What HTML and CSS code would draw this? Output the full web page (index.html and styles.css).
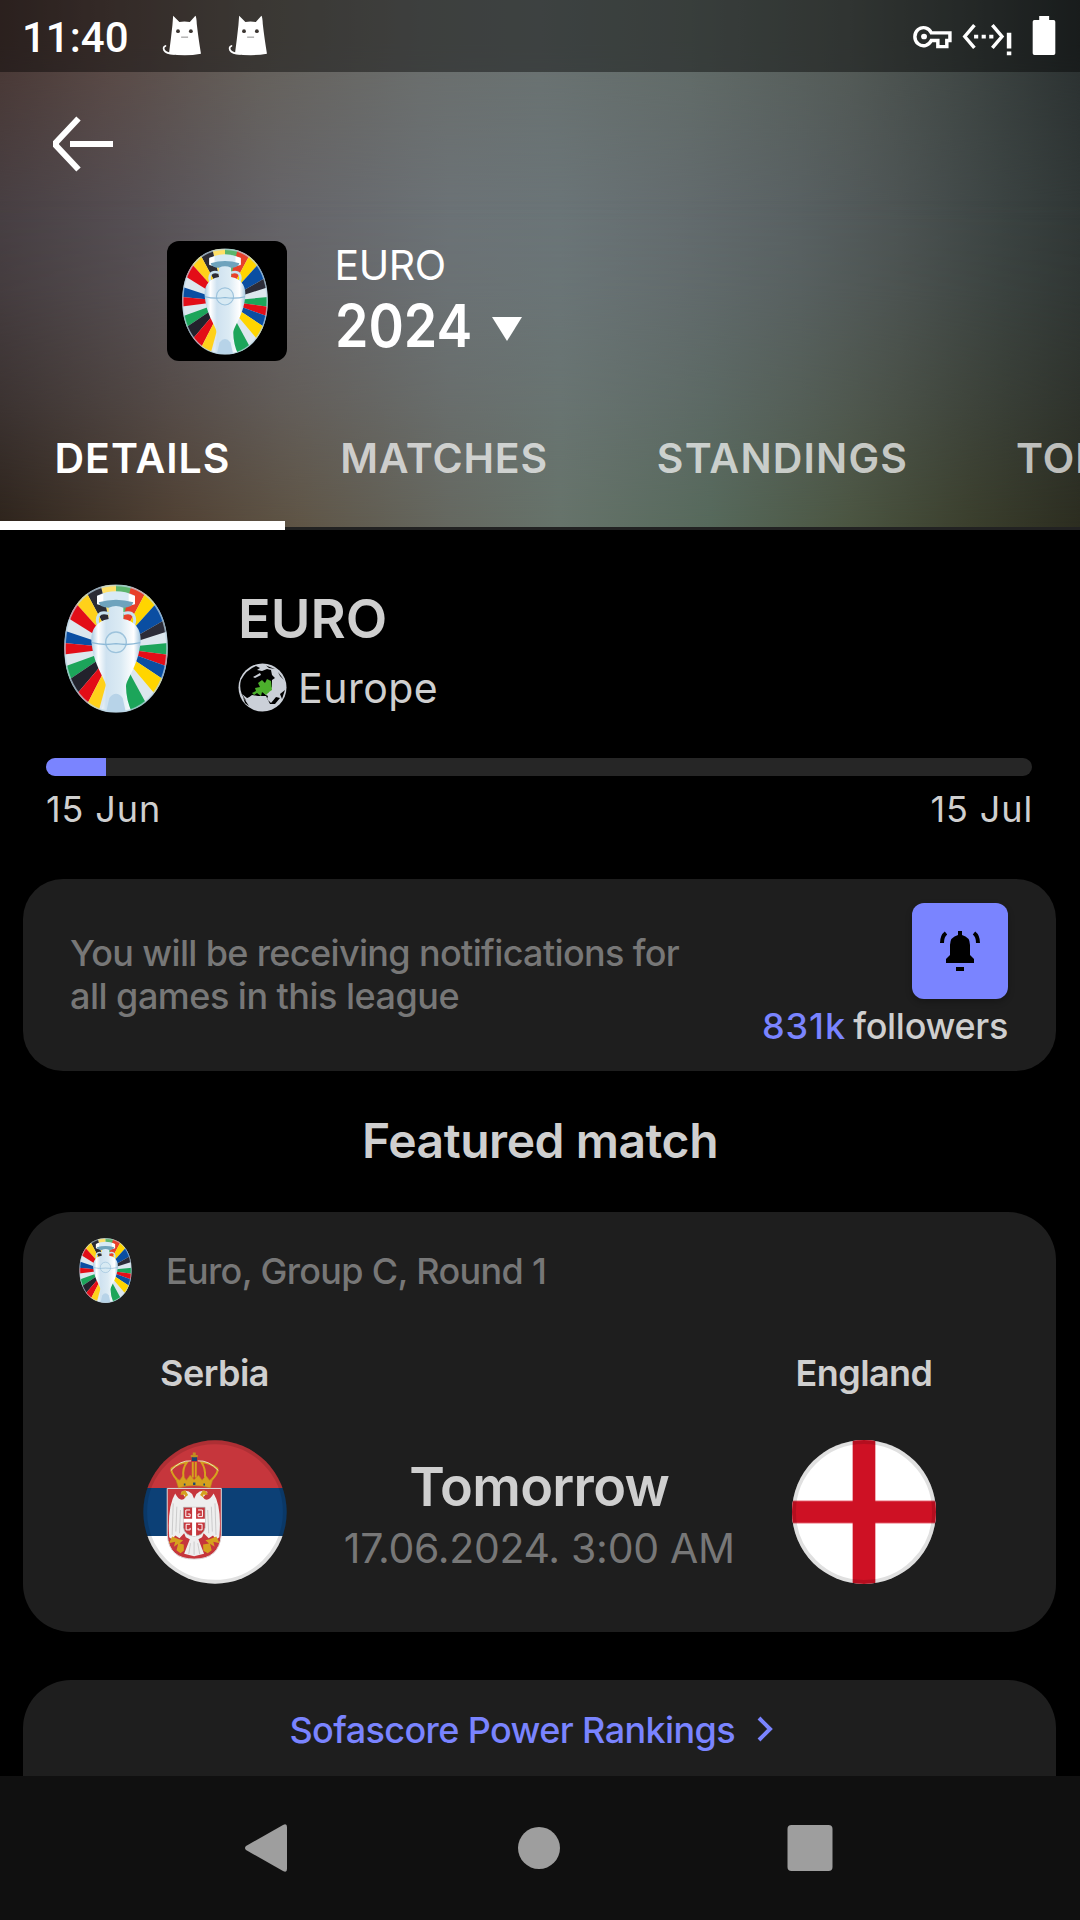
FILE: index.html
```html
<!DOCTYPE html>
<html lang="en">
<head>
<meta charset="utf-8">
<title>EURO 2024</title>
<link rel="stylesheet" href="styles.css">
</head>
<body>
<svg class="defs" width="0" height="0" aria-hidden="true">
  <defs>
    <clipPath id="oval"><path d="M260 45C350 45 415 115 415 235C415 350 350 428 260 428C170 428 105 350 105 235C105 115 170 45 260 45Z"/></clipPath>
    <linearGradient id="silver" x1="0" x2="1" y1="0" y2="0"><stop offset="0" stop-color="#a9cbe2"/><stop offset=".14" stop-color="#fff"/><stop offset=".3" stop-color="#cfe2f0"/><stop offset=".6" stop-color="#dcebf4"/><stop offset=".86" stop-color="#fff"/><stop offset="1" stop-color="#a3c6df"/></linearGradient>
    <symbol id="trophy" viewBox="104 43 312 387">
      <g clip-path="url(#oval)">
        <path fill="#dce7ee" d="M100 40h320v400H100z"/>
        <path fill="#ffe066" d="M260 235L210 30H260z"/>
        <path fill="#5bb56c" d="M260 235V30H315z"/>
        <path fill="#e8402a" d="M260 235L310 30L358 52z"/>
        <path fill="#ffd500" d="M260 235L358 52L398 82z"/>
        <path fill="#0a4ea2" d="M260 235L398 82L425 140z"/>
        <path fill="#2c2c38" d="M260 235L425 140L430 180z"/>
        <path fill="#1ca55a" d="M260 235L430 219V257z"/>
        <path fill="#e30d17" d="M260 235L430 257V296z"/>
        <path fill="#0a4ea2" d="M260 235L430 296L420 341z"/>
        <path fill="#ffd500" d="M260 235L420 341L385 383z"/>
        <path fill="#1ca55a" d="M260 235L358 415L300 440z"/>
        <path fill="#2c2c34" d="M260 235L166 58L206 38L210 30z"/>
        <path fill="#ffd11a" d="M260 235L166 58L128 88z"/>
        <path fill="#e30d17" d="M260 235L128 88L98 134z"/>
        <path fill="#0a4ea2" d="M260 235L90 178V219z"/>
        <path fill="#e30d17" d="M260 235L90 219V256z"/>
        <path fill="#1ca55a" d="M260 235L90 296L110 336z"/>
        <path fill="#22222c" d="M260 235L110 336L138 378z"/>
        <path fill="#e30d17" d="M260 235L138 378L168 414z"/>
        <path fill="#ffd11a" d="M260 235L168 414L206 432z"/>
        <path fill="none" stroke="#c8e2ef" stroke-width="9" d="M238 132C205 122 200 146 207 166M282 132C315 122 320 146 313 166"/>
        <path fill="url(#silver)" d="M238 108h44v40C325 155 338 190 333 222C326 290 292 325 290 350Q290 390 308 430H212Q230 390 230 350C228 325 194 290 187 222C182 190 195 155 238 148z"/>
        <path fill="#d8eaf5" d="M203 78Q260 52 317 78V104Q260 124 203 104z"/>
        <path fill="#fff" d="M203 80L222 72V108L203 102zM298 72L317 80V102L298 108z"/>
        <path fill="#6fa3bd" d="M208 98Q260 82 312 98Q308 114 282 114Q260 104 238 114Q212 114 208 98z"/>
        <path fill="#b7d3e8" d="M240 385Q260 360 280 385L290 430H230z"/>
        <circle cx="260" cy="218" r="31" fill="#d8eaf3" stroke="#9dc3dc" stroke-width="4"/>
        <path fill="none" stroke="#8db9d7" stroke-width="4" d="M187 219Q222 228 260 222Q298 228 333 219"/>
      </g>
      <path fill="none" stroke="#b8d3e2" stroke-opacity=".7" stroke-width="5" d="M260 47C349 47 413 117 413 235C413 349 349 427 260 427C171 427 107 349 107 235C107 117 171 47 260 47Z"/>
    </symbol>
    <symbol id="cat" viewBox="470 45 115 122" preserveAspectRatio="none">
      <path fill="#fff" d="M502 47L520 66Q534 62 550 66L566 47Q569 49 570 72Q574 110 582 160Q535 169 490 160Q496 115 500 75z"/>
      <path fill="none" stroke="#fff" stroke-width="5" stroke-linecap="round" d="M480 137Q472 140 476 150Q482 160 505 161"/>
      <circle cx="516" cy="93" r="5.500" fill="#3b3531"/><circle cx="553" cy="93" r="5.500" fill="#3b3531"/>
      <path stroke="#aaa" stroke-width="4" d="M525 111h20"/>
    </symbol>
  </defs>
</svg>

<div class="screen">
  <header class="header">
    <div class="status">
      <span class="clock">11:40</span>
      <svg class="cat"><use href="#cat"/></svg>
      <svg class="cat"><use href="#cat"/></svg>
      <div class="status-icons">
        <svg width="39" height="42" viewBox="1085 45 113 125" preserveAspectRatio="none"><path fill="none" stroke="#fff" stroke-width="10" d="M1138 98A25 27 0 1 0 1138 121H1157V139H1183V121H1192V98z"/><circle cx="1117" cy="109" r="8.500" fill="#fff"/></svg>
        <svg class="net" width="50" height="42" viewBox="1228 45 145 125" preserveAspectRatio="none"><path fill="none" stroke="#fff" stroke-width="10" d="M1264 75L1236 109L1264 143M1316 75L1344 109L1316 143"/><path fill="#fff" d="M1263 104h12v11h-12zM1285 104h12v11h-12zM1307 104h12v11h-12zM1358 98h13v47h-13zM1358 154h13v11h-13z"/></svg>
        <svg width="24" height="42" viewBox="1430 45 70 125" preserveAspectRatio="none"><path fill="#fff" d="M1451 48h29v12h13q5 0 5 5v94q0 5-5 5h-56q-5 0-5-5v-94q0-5 5-5h14z"/></svg>
      </div>
    </div>
    <div class="toolbar">
      <svg width="62" height="56" viewBox="0 0 62 56"><path fill="none" stroke="#fff" stroke-width="6" d="M26.500 2.500L4 26.500V29.500L26.500 53.500M18 28H61"/></svg>
    </div>
    <div class="season">
      <div class="logo-box"><svg width="86" height="107"><use href="#trophy"/></svg></div>
      <div class="season-text">
        <div class="season-name">EURO</div>
        <div class="season-year"><span class="year">2024</span><svg width="30" height="24" viewBox="0 0 30 24"><path fill="#fff" d="M0 0H30L15 24z"/></svg></div>
      </div>
    </div>
    <nav class="tabs">
      <div class="tab tab-details active">DETAILS</div>
      <div class="tab tab-matches">MATCHES</div>
      <div class="tab tab-standings">STANDINGS</div>
      <div class="tab tab-top">TOP PLAYERS</div>
    </nav>
  </header>

  <main class="content">
    <section class="league">
      <svg class="league-logo" width="104" height="129"><use href="#trophy"/></svg>
      <div class="league-text">
        <div class="league-name">EURO</div>
        <div class="region">
          <svg width="49" height="49" viewBox="0 0 49 49"><circle cx="24.500" cy="24.500" r="24" fill="#cbd0d8"/><path fill="#000" d="M3 17Q8 7 18 3L22 5L19 7L24 8L29 6L33 7L34 12L37 15L34 17V24L32 26L30 30H26L28 32L30 33L29 36L33 40L38 34L42 35L37 41L32 41L28 33L20 33L14 32L10 35L8 38Q0 28 3 17z"/><path fill="#cbd0d8" d="M15 14L22 10L23 12L17 15zM4 31L9 35L17 33L26 34L30 42L24 48L12 44z"/><path fill="#000" d="M28 2.500L37 6L31 5zM40 9L46 17L42 13zM42 31L47 27L44 36zM5 34L11 43L7 40z"/><path fill="#4caf2c" d="M14 30L18 28L17 25L22 24L20 20L24 17L27 20L29 16L33 18L34 27L31 29L28 32L24 29L23 33L19 30L16 32z"/></svg>
          <span>Europe</span>
        </div>
      </div>
    </section>

    <section class="season-progress">
      <div class="track"><div class="fill" style="width:6.1%"></div></div>
      <div class="dates"><span>15 Jun</span><span class="end">15 Jul</span></div>
    </section>

    <section class="card notify">
      <p class="notify-text">You will be receiving notifications for<br><span class="second-line">all games in this league</span></p>
      <div class="follow">
        <div class="bell"><svg width="42" height="42" viewBox="0 0 42 42"><path d="M19 1h4v4q8 2 8 10v10l4 4v4H7v-4l4-4V15q0-8 8-10zM17 37h8v4h-8z"/><path fill="none" stroke="#000" stroke-width="4" d="M7 3Q3 6 3 13M35 3Q39 6 39 13"/></svg></div>
        <div class="followers"><b>831k</b> followers</div>
      </div>
    </section>

    <h2 class="section-title">Featured match</h2>

    <section class="card match">
      <div class="match-head"><svg width="53" height="65"><use href="#trophy"/></svg><span>Euro, Group C, Round 1</span></div>
      <div class="match-body">
        <div class="team">
          <span class="team-name">Serbia</span>
          <svg width="144" height="144" viewBox="67 60 434 432">
            <defs><clipPath id="disc"><circle cx="284" cy="276" r="216"/></clipPath></defs>
            <g clip-path="url(#disc)">
              <path fill="#c6363c" d="M60 50h450v154H60z"/><path fill="#0c4076" d="M60 204h450v144H60z"/><path fill="#fff" d="M60 348h450v150H60z"/>
              <path fill="#c6363c" stroke="#ddd" stroke-width="3" d="M140 205H303V345Q297 418 221 418Q145 418 140 345z"/>
              <path fill="#eee" d="M182 216Q199 205 215 222L221 236L228 222Q244 205 262 216L248 232Q262 250 280 220Q305 260 297 352L287 359L278 347L265 355L250 340L245 352L234 358L251 402L221 409L191 402L208 358L196 352L191 340L177 355L164 347L155 359L146 352Q140 260 164 220Q180 250 195 232z"/>
              <path fill="none" stroke="#b9b9b9" stroke-width="2" d="M158 250L155 345M169 260L166 335M180 270L177 340M284 250L287 345M273 260L276 335M262 270L265 340M210 370L205 403M221 365V405M232 370L238 403"/>
              <path fill="#c6363c" stroke="#aaa" stroke-width="2" d="M189 262H254V323Q250 347 221 349Q193 347 189 323z"/>
              <path fill="#fff" d="M215 262h12v34h27v12h-27v41h-12v-41h-26v-12h26z"/>
              <path fill="none" stroke="#fff" stroke-width="3" d="M209 270h-13v20h13v-8h-7M233 270h13v20h-13v-8h7M209 313h-12v17h12v-6M233 313h12v17h-12v-6"/>
              <path fill="#d6a11e" d="M180 224Q182 210 195 211L203 225L191 234L194 224zM262 224Q260 210 247 211L239 225L251 234L248 224zM155 350L175 358L188 361L177 371L190 374V393L180 400L168 391L173 372L160 381L164 366L145 370zM288 350L268 358L255 361L266 371L248 374L249 393L262 400L274 391L269 372L283 381L279 366L298 370z"/>
              <path fill="#d6a11e" stroke="#c28d20" stroke-width="2" d="M174 203L165 174L178 180L187 167L198 180L209 165L221 179L234 165L245 180L257 167L267 180L278 174L270 203Q221 190 174 203z"/>
              <path fill="none" stroke="#d6a11e" stroke-width="6" d="M169 178Q150 157 153 145Q182 125 200 126Q185 144 189 172M275 178Q295 157 291 145Q265 125 243 126Q256 144 254 172M217 125V172M226 125V172"/>
              <path fill="none" stroke="#e8dcc0" stroke-width="3" d="M151 151Q180 119 212 122M294 151Q264 119 232 122"/>
              <path fill="#c28d20" d="M217 97h9v7h6v7h-6v8h-9v-8h-6v-7h6z"/><path fill="#174573" d="M214 111h16v11h-16zM218 187h7v8h-7zM190 190h5v6h-5zM249 190h5v6h-5z"/>
              <circle cx="284" cy="276" r="210.500" fill="none" stroke="#000" stroke-opacity=".12" stroke-width="12"/>
            </g>
          </svg>
        </div>
        <div class="kickoff"><div class="day">Tomorrow</div><div class="date">17.06.2024. 3:00 AM</div></div>
        <div class="team">
          <span class="team-name">England</span>
          <svg width="144" height="144" viewBox="0 0 146 146"><defs><clipPath id="disc2"><circle cx="73" cy="73" r="73"/></clipPath></defs><g clip-path="url(#disc2)"><path fill="#fff" d="M0 0h146v146H0z"/><path fill="#f09ca5" d="M0 61h146v24H0z"/><path fill="#ce1124" d="M61.500 0h23v146h-23zM0 62h146v22H0z"/><circle cx="73" cy="73" r="71" fill="none" stroke="#000" stroke-opacity=".12" stroke-width="4"/></g></svg>
        </div>
      </div>
    </section>

    <section class="card rankings">
      <span>Sofascore Power Rankings</span>
      <svg width="16" height="26" viewBox="0 0 16 26"><path fill="none" stroke="#7a84ff" stroke-width="4" d="M2 2L13 13L2 24"/></svg>
    </section>
  </main>

  <footer class="navbar">
    <svg width="44" height="50" viewBox="0 0 44 50"><path fill="#9e9e9e" d="M39 2Q43 0 43 4V46Q43 50 39 48L2 27Q0 25 2 23z"/></svg>
    <svg class="home" width="44" height="50" viewBox="0 0 44 50"><circle cx="22" cy="25" r="21" fill="#9e9e9e"/></svg>
    <svg width="46" height="50" viewBox="0 0 46 50"><rect x=".5" y="2" width="45" height="46" rx="4" fill="#9e9e9e"/></svg>
  </footer>
</div>
</body>
</html>
```
FILE: styles.css
```css
* { box-sizing: border-box; }
body { margin: 0; background: #000; font-family: Inter, Roboto, sans-serif; color: #cfcfcf; }
svg { display: block; flex: none; }
.defs { position: absolute; }
.screen { width: 1080px; height: 1920px; overflow: hidden; display: flex; flex-direction: column; }

/* header */
.header {
  position: relative; z-index: 0; flex: none; height: 530px; overflow: hidden; color: #fff;
  background: linear-gradient(90deg, #484044 0, #565055 135px, #66656a 280px, #6c7377 450px, #6b7578 560px, #646c6f 680px, #596163 800px, #4d5454 900px, #3c4443 1000px, #313837 1080px);
}
.header::before, .header::after { content: ""; position: absolute; inset: 0; z-index: -1; }
.header::before {
  background: linear-gradient(90deg, #4a3834 0, #5a4944 110px, #656059 260px, #6a6d6b 420px, #697170 540px, #616b67 690px, #535a56 850px, #3d4442 980px, #2b3131 1080px);
  -webkit-mask-image: linear-gradient(#000 40px, transparent 220px);
  mask-image: linear-gradient(#000 40px, transparent 220px);
}
.header::after {
  background: linear-gradient(90deg, #2e241c 0, #514234 180px, #5f5546 300px, #656860 450px, #66736a 560px, #56695b 710px, #4b5541 850px, #3b3f2d 970px, #2c2d20 1080px);
  -webkit-mask-image: linear-gradient(transparent 200px, rgba(0, 0, 0, .12) 290px, rgba(0, 0, 0, .45) 400px, #000 525px);
  mask-image: linear-gradient(transparent 200px, rgba(0, 0, 0, .12) 290px, rgba(0, 0, 0, .45) 400px, #000 525px);
}
.status { height: 72px; display: flex; align-items: center; padding: 0 24px 0 22px; background: rgba(0, 0, 0, .42); }
.clock { font: 500 42px/72px Roboto, sans-serif; width: 140px; padding-top: 3px; }
.cat { width: 40px; height: 41px; margin-right: 26px; margin-top: -2px; }
.status-icons { display: flex; margin-left: auto; }
.net { margin: 0 20px 0 10px; }
.toolbar { height: 169px; padding: 44px 0 0 52px; }
.season { display: flex; padding-left: 166.5px; gap: 48px; }
.logo-box { width: 120px; height: 120px; border-radius: 12px; background: #000; display: flex; align-items: center; justify-content: center; padding-right: 3px; }
.season-name { font-size: 41px; line-height: 48px; letter-spacing: -.4px; }
.season-year { font-size: 59px; line-height: 74px; font-weight: 600; display: flex; align-items: center; gap: 20px; }
.season-year svg { margin-top: 5px; }
.year { transform: scaleX(.91); transform-origin: left; margin-right: -13px; }
.tabs { display: flex; margin-top: 23px; height: 144px; font-size: 41px; line-height: 144px; font-weight: 600; letter-spacing: 1px; white-space: nowrap; color: rgba(255, 255, 255, .7); border-bottom: 3px solid #222; }
.tab { flex: none; height: 144px; text-align: center; }
.tab-details { width: 285px; }
.tab-matches { width: 318px; letter-spacing: .8px; }
.tab-standings { width: 359px; letter-spacing: 1.2px; }
.tab-top { padding-left: 54px; }
.tab.active { color: #fff; border-bottom: 9px solid #fff; }

/* content */
.content { flex: 1; min-height: 0; overflow: hidden; display: flex; flex-direction: column; }
.league { display: flex; padding: 54px 64px 0; height: 228px; flex: none; }
.league-text { margin-left: 70px; padding-top: 1px; }
.league-name { font-size: 54px; font-weight: 600; line-height: 68px; }
.region { display: flex; align-items: center; height: 49px; margin-top: 10px; gap: 11px; font-size: 41px; letter-spacing: .5px; }
.season-progress { padding: 0 48px 0 46px; flex: none; height: 121px; }
.track { height: 18px; border-radius: 9px; background: #262626; overflow: hidden; }
.fill { height: 18px; background: #7a84ff; }
.dates { display: flex; justify-content: space-between; font-size: 36px; line-height: 66px; letter-spacing: .9px; }
.dates .end { margin-right: -1px; }
.card { flex: none; margin: 0 24px 0 22.5px; background: #1e1e1e; border-radius: 48px; }
.notify { height: 192px; display: flex; justify-content: space-between; align-items: center; padding: 0 48px 0 47.5px; border-radius: 40px; }
.notify-text { margin: 0; font-size: 36px; font-weight: 500; line-height: 43px; letter-spacing: -.65px; color: #777; white-space: nowrap; }
.second-line { letter-spacing: -.52px; }
.follow { height: 144px; display: flex; flex-direction: column; align-items: flex-end; }
.bell { flex: none; width: 96px; height: 96px; border-radius: 12px; background: #7a84ff; display: flex; align-items: center; justify-content: center; box-shadow: 0 3px 6px rgba(0, 0, 0, .25); }
.followers { font-size: 36px; font-weight: 500; line-height: 54px; letter-spacing: -.3px; white-space: nowrap; }
.followers b { font-weight: 500; letter-spacing: .9px; color: #7a84ff; margin-right: -2px; }
.section-title { margin: 0; height: 141px; line-height: 140px; text-align: center; font-size: 48px; font-weight: 600; letter-spacing: -.45px; flex: none; }
.match { height: 420px; }
.match-head { display: flex; align-items: center; gap: 34px; padding: 26px 57px 0 56.5px; height: 91px; font-size: 36px; font-weight: 500; letter-spacing: -.68px; color: #777; }
.match-body { display: flex; justify-content: space-between; margin-top: 44px; padding: 0 120px; }
.team { width: 144px; display: flex; flex-direction: column; align-items: center; }
.team-name { font-size: 36px; font-weight: 600; line-height: 52px; letter-spacing: -.55px; margin-bottom: 41px; }
.kickoff { text-align: center; padding-top: 106px; white-space: nowrap; }
.day { font-size: 54px; font-weight: 600; line-height: 68px; letter-spacing: -.7px; }
.date { font-size: 41px; line-height: 54px; letter-spacing: -.3px; color: #777; }
.rankings { margin-top: 48px; height: 200px; display: flex; justify-content: center; gap: 22px; padding-right: 16px; font-size: 36px; font-weight: 500; line-height: 100px; letter-spacing: -.6px; color: #7a84ff; }
.rankings svg { margin-top: 36px; }

/* system navigation */
.navbar { height: 144px; flex: none; background: #101010; display: flex; align-items: center; justify-content: space-between; padding: 0 247px 0 244px; }
.home { margin-left: 3px; }
```
